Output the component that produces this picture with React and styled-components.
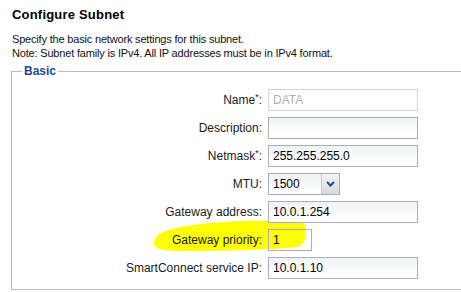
import React from 'react'
import styled, { createGlobalStyle } from 'styled-components'

const GlobalStyle = createGlobalStyle`
    html, body {
        margin: 0;
        padding: 0;
        background: #fff;
        overflow: hidden;
    }
    body {
        font-family: "Liberation Sans", Arial, sans-serif;
        color: #000;
    }
`

const fields = [
    { label: 'Name', required: true, value: 'DATA', disabled: true },
    { label: 'Description', value: '' },
    { label: 'Netmask', required: true, value: '255.255.255.0' },
    { label: 'MTU', select: true, value: '1500' },
    { label: 'Gateway address', value: '10.0.1.254' },
    { label: 'Gateway priority', value: '1', small: true },
    { label: 'SmartConnect service IP', value: '10.0.1.10' },
]

const App = () => {
    return (
        <Pagina>
            <GlobalStyle />
            <Titulo>Configure Subnet</Titulo>
            <Ayuda>
                Specify the basic network settings for this subnet.<br />
                Note: Subnet family is IPv4. All IP addresses must be in IPv4 format.
            </Ayuda>
            <Grupo>
                <Leyenda>Basic</Leyenda>
                <Formulario>
                    {fields.map(f => (
                        <React.Fragment key={f.label}>
                            <Etiqueta>
                                {f.label}{f.required && <sup>*</sup>}:
                            </Etiqueta>
                            {f.select ? (
                                <Selector>
                                    <span>{f.value}</span>
                                    <BotonSelector>
                                        <svg width="9" height="6" viewBox="0 0 9 6">
                                            <path d="M1 1 L4.5 4.5 L8 1" fill="none" stroke="#1d4b9a" strokeWidth="2" />
                                        </svg>
                                    </BotonSelector>
                                </Selector>
                            ) : (
                                <Campo disabled={f.disabled} $corto={f.small}>{f.value}</Campo>
                            )}
                        </React.Fragment>
                    ))}
                    {/* marker stroke drawn over the priority row */}
                    <Marcador width="154" height="32" viewBox="0 0 154 32">
                        <path
                            d="M1 22 C2 15 10 10 28 7 C60 1 100 0 142 1 C150 1 153 4 153 10 C153 17 152 24 145 27 C115 30 70 31 28 31 C10 31 0 29 1 22 Z"
                            fill="#ffff00"
                        />
                    </Marcador>
                </Formulario>
            </Grupo>
        </Pagina>
    )
}

const Pagina = styled.div`
    padding: 7px 0 0 12px;
    width: 461px;
    box-sizing: border-box;
`

const Titulo = styled.h1`
    margin: 0;
    font-size: 13px;
    font-weight: bold;
    line-height: 16px;
    letter-spacing: 0.2px;
`

const Ayuda = styled.p`
    margin: 9px 0 0;
    font-size: 11px;
    line-height: 14px;
    letter-spacing: -0.18px;
    color: #111;
`

const Grupo = styled.fieldset`
    margin: 5px 0 0 -1px;
    padding: 0 0 10px 0;
    border: 1px solid #b7b9c5;
    border-right: none;
    box-sizing: border-box;
    min-width: 0;
`

const Leyenda = styled.legend`
    margin-left: 10px;
    padding: 0 2px;
    font-size: 12px;
    font-weight: bold;
    color: #1b4b9b;
    line-height: 12px;
`

const Formulario = styled.div`
    position: relative;
    display: grid;
    grid-template-columns: 250px auto;
    column-gap: 6px;
    row-gap: 6px;
    margin-top: 12px;
    align-items: center;
`

const Etiqueta = styled.label`
    position: relative;
    z-index: 1;
    text-align: right;
    font-size: 12px;
    color: #1a1a1a;

    sup {
        font-size: 9px;
        line-height: 0;
        vertical-align: 4px;
    }
`

const Campo = styled.div`
    position: relative;
    z-index: 1;
    box-sizing: border-box;
    height: 22px;
    width: ${props => props.$corto ? '44px' : '150px'};
    padding: 0 4px;
    font-size: 12px;
    line-height: 21px;
    border: 1px solid ${props => props.disabled ? '#d3d3dc' : '#a9abc0'};
    color: ${props => props.disabled ? '#b0b0b0' : '#000'};
    background: ${props => props.$corto
        ? 'transparent'
        : props.disabled ? '#fff' : 'linear-gradient(#eef3f3, #fbfcfc 60%, #fff)'};
`

const Selector = styled.div`
    position: relative;
    z-index: 1;
    box-sizing: border-box;
    display: flex;
    align-items: center;
    justify-content: space-between;
    height: 22px;
    width: 72px;
    padding-left: 4px;
    font-size: 12px;
    border: 1px solid #a9abc0;
    background: linear-gradient(#eef3f3, #fff);
`

const BotonSelector = styled.div`
    display: flex;
    align-items: center;
    justify-content: center;
    width: 17px;
    height: 100%;
    border-left: 1px solid #c6c8d2;
    background: linear-gradient(#f4f4f4, #d9d9d9);
`

const Marcador = styled.svg`
    position: absolute;
    left: 141px;
    top: 131px;
    z-index: 0;
`

export default App
